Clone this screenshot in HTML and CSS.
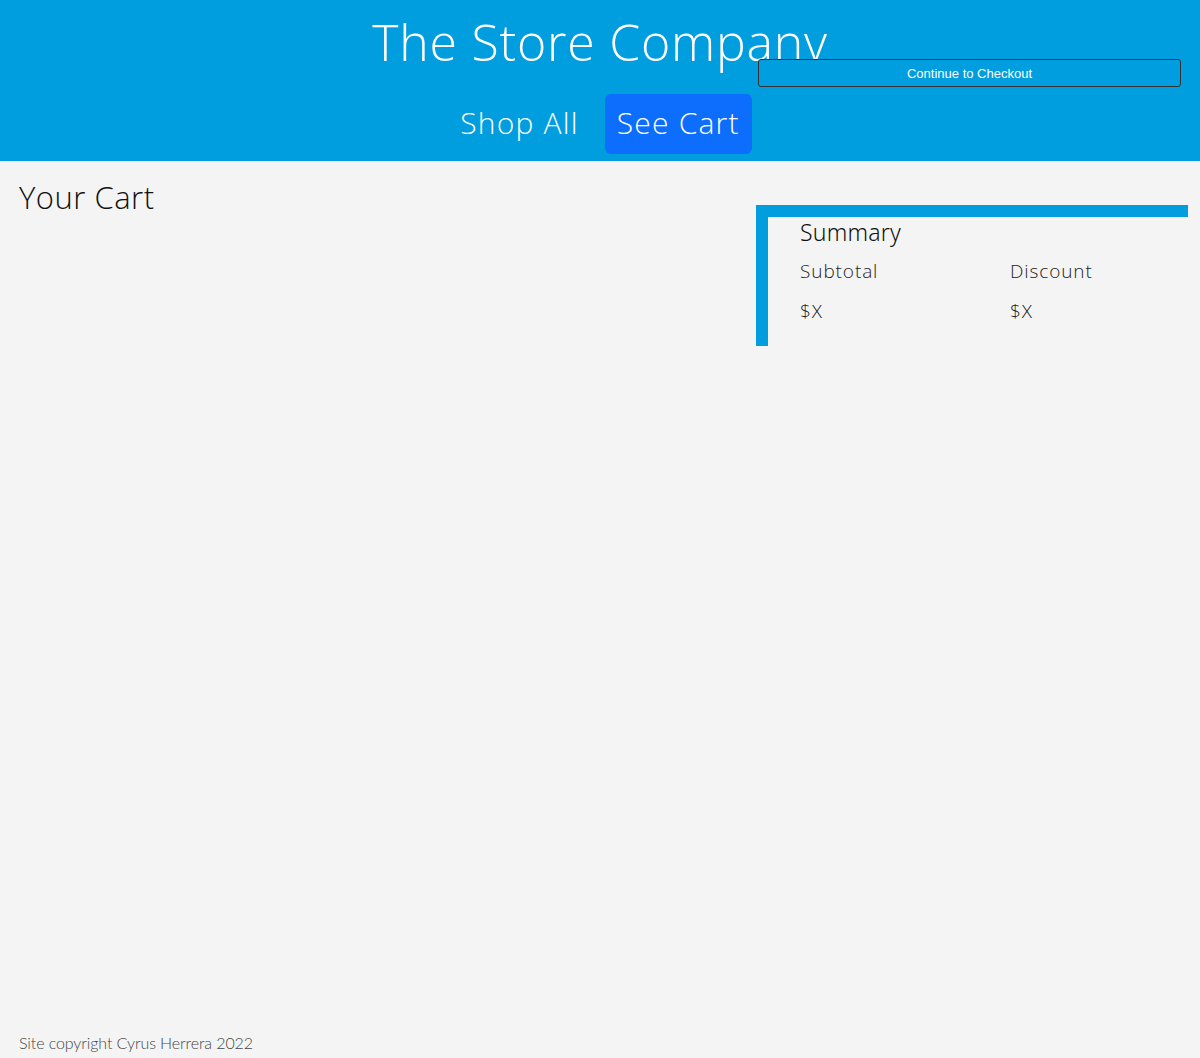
FILE: index.html
```html
<!DOCTYPE html>
<html lang="en">
<head>
<meta charset="utf-8">
<title>The Store Company - Cart</title>
<link rel="stylesheet" href="styles.css">
</head>
<body>
<header class="site-header">
  <h1 class="brand">The Store Company</h1>
  <nav class="nav">
    <a class="nav-link" href="#">Shop All</a>
    <a class="nav-link active" href="#">See Cart</a>
  </nav>
  <button class="checkout">Continue to Checkout</button>
</header>
<main class="page">
  <section class="cart">
    <h2 class="cart-title">Your Cart</h2>
  </section>
  <aside class="summary">
    <h3 class="summary-title">Summary</h3>
    <div class="summary-grid">
      <span class="label">Subtotal</span>
      <span class="label">Discount</span>
      <span class="value">$X</span>
      <span class="value">$X</span>
    </div>
  </aside>
</main>
<footer class="footer">Site copyright Cyrus Herrera 2022</footer>
</body>
</html>
```

FILE: styles.css
```css
html, body {
  margin: 0;
  padding: 0;
}
body {
  background: #f4f4f4;
  font-family: "Open Sans", sans-serif;
  font-weight: 300;
  color: #111;
  min-height: 1058px;
  display: flex;
  flex-direction: column;
}
.site-header {
  position: relative;
  background: #009ddf;
  height: 161px;
  display: flex;
  flex-direction: column;
  align-items: center;
}
.brand {
  margin: 7px 0 0;
  font-size: 50px;
  font-weight: 300;
  color: #fff;
  line-height: 70px;
  letter-spacing: 0.75px;
}
.nav {
  display: flex;
  gap: 14px;
  margin-top: 17px;
  margin-left: 0;
}
.nav-link {
  color: #fff;
  text-decoration: none;
  font-size: 30px;
  font-weight: 300;
  height: 60px;
  line-height: 58px;
  padding: 0 12px;
  border-radius: 6px;
  letter-spacing: 1.2px;
}
.nav-link.active {
  background: #0d6efd;
}
.checkout {
  position: absolute;
  left: 758px;
  top: 59px;
  width: 423px;
  height: 28px;
  background: #009ddf;
  border: 1px solid #333;
  border-radius: 3px;
  color: #fff;
  font-family: "Liberation Sans", Arial, sans-serif;
  font-size: 13px;
  padding: 0;
}
.page {
  flex: 1;
  display: grid;
  grid-template-columns: 1fr 432px;
  padding: 0 12px 0 19px;
}
.cart-title {
  margin: 18px 0 0;
  font-size: 31px;
  font-weight: 300;
  line-height: 36px;
  letter-spacing: 0.5px;
}
.summary {
  margin-top: 44px;
  height: 141px;
  box-sizing: border-box;
  border-left: 12px solid #009ddf;
  border-top: 12px solid #009ddf;
  padding: 0 0 0 32px;
}
.summary-title {
  margin: 0;
  font-family: "Noto Sans", sans-serif;
  font-size: 23px;
  font-weight: 300;
  line-height: 30px;
  letter-spacing: 0.2px;
}
.summary-grid {
  display: grid;
  grid-template-columns: 210px 1fr;
  row-gap: 12px;
  margin-top: 10px;
  font-size: 19px;
  line-height: 28px;
  color: #222;
  letter-spacing: 0.9px;
}
.footer {
  padding: 0 19px 4px;
  font-family: "Lato", sans-serif;
  font-weight: 300;
  font-size: 16px;
  color: #444;
  line-height: 22px;
  letter-spacing: -0.1px;
}
```
